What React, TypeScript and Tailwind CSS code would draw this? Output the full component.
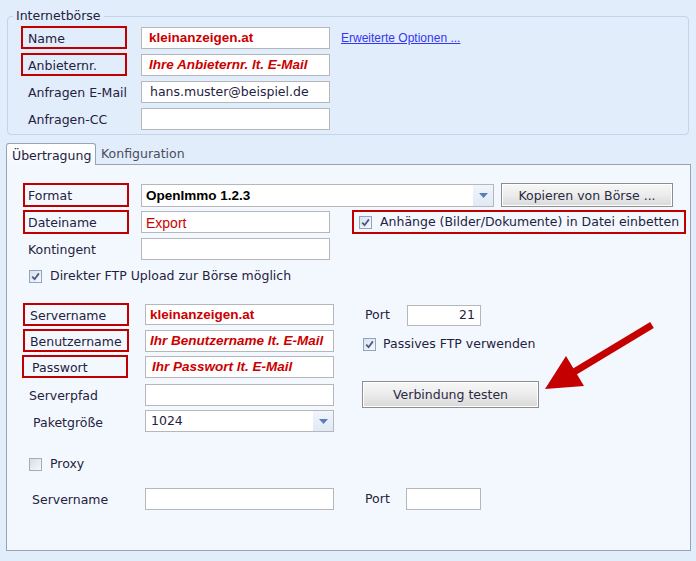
import React from "react";

const ARIAL = "font-['Liberation_Sans',Arial,sans-serif]";

function Check({ checked }: { checked?: boolean }) {
  return (
    <span className="w-[13px] h-[13px] shrink-0 border border-[#8fa3c2] bg-gradient-to-br from-[#d9e1ec] to-[#f8fafd] flex items-center justify-center">
      {checked && (
        <svg width="9" height="9" viewBox="0 0 9 9">
          <path d="M1.2 4.6 L3.6 7.2 L7.9 1.4" stroke="#4b5b84" strokeWidth="1.8" fill="none" />
        </svg>
      )}
    </span>
  );
}

function LabelBox({
  children,
  boxed,
  className = "",
}: {
  children: React.ReactNode;
  boxed?: boolean;
  className?: string;
}) {
  return (
    <div
      className={`w-[106px] shrink-0 border-2 flex items-center whitespace-nowrap ${
        boxed ? "border-[#c00000]" : "border-transparent"
      } ${className}`}
    >
      {children}
    </div>
  );
}

function Input({ children, className = "" }: { children?: React.ReactNode; className?: string }) {
  return (
    <div className={`shrink-0 bg-white border border-[#b5b7bb] flex items-center whitespace-nowrap overflow-hidden ${className}`}>
      {children}
    </div>
  );
}

function Select({ children, className = "" }: { children?: React.ReactNode; className?: string }) {
  return (
    <div className={`shrink-0 bg-white border border-[#b5b7bb] flex items-stretch ${className}`}>
      <div className="flex-1 flex items-center whitespace-nowrap overflow-hidden">{children}</div>
      <div className="w-[20px] bg-gradient-to-b from-[#f1f5fb] to-[#e0e9f5] flex items-center justify-center">
        <svg width="9" height="5" viewBox="0 0 9 5">
          <path d="M0 0 H9 L4.5 5 Z" fill="#5a7eb2" />
        </svg>
      </div>
    </div>
  );
}

function Button({ children, className = "" }: { children: React.ReactNode; className?: string }) {
  return (
    <div
      className={`shrink-0 border border-[#8d8e90] bg-gradient-to-b from-[#f7f7f7] via-[#ececec] to-[#d9d9d9] shadow-[inset_0_0_0_1px_#ffffff] flex items-center justify-center pt-[2px] text-[#2a2a44] ${className}`}
    >
      {children}
    </div>
  );
}

const red = `${ARIAL} font-bold text-[13.5px] text-[#cc0000]`;

export default function App() {
  return (
    <div className="relative w-[696px] h-[561px] overflow-hidden bg-[#e2edfb] text-[12.5px] leading-none text-[#1f2240] font-['DejaVu_Sans',Verdana,sans-serif]">
      {/* Internetbörse group */}
      <fieldset className="ml-[7px] mt-[8px] w-[682px] border border-[#c3d3e8] rounded-[4px] p-0 pb-[4px]">
        <legend className="ml-[5px] px-[3px] leading-[16px]">Internetbörse</legend>
        <div className="flex flex-col gap-[4px] pt-[2px]">
          <div className="flex items-center h-[23px]">
            <LabelBox boxed className="ml-[13px] h-[23px] pl-[5px] pt-[3px]">Name</LabelBox>
            <Input className="ml-[14px] w-[189px] h-[22px] pl-[7px]">
              <span className={red}>kleinanzeigen.at</span>
            </Input>
            <span className={`${ARIAL} ml-[11px] text-[12px] text-[#3636f5] underline`}>Erweiterte Optionen ...</span>
          </div>
          <div className="flex items-center h-[23px]">
            <LabelBox boxed className="ml-[13px] h-[23px] pl-[5px] pt-[3px]">Anbieternr.</LabelBox>
            <Input className="ml-[14px] w-[189px] h-[22px] pl-[7px]">
              <span className={`${red} italic`}>Ihre Anbieternr. lt. E-Mail</span>
            </Input>
          </div>
          <div className="flex items-center h-[23px]">
            <LabelBox className="ml-[13px] h-[23px] pl-[5px] pt-[3px]">Anfragen E-Mail</LabelBox>
            <Input className="ml-[14px] w-[189px] h-[22px] pl-[8px] pt-[1px]">hans.muster@beispiel.de</Input>
          </div>
          <div className="flex items-center h-[23px]">
            <LabelBox className="ml-[13px] h-[23px] pl-[5px] pt-[3px]">Anfragen-CC</LabelBox>
            <Input className="ml-[14px] w-[189px] h-[22px]" />
          </div>
        </div>
      </fieldset>

      {/* Tabs */}
      <div className="ml-[6px] mt-[8px] flex items-end h-[21px]">
        <div className="relative z-10 -mb-px h-[22px] w-[90px] border border-b-0 border-[#9aa4b0] rounded-t-[3px] bg-gradient-to-b from-[#ffffff] to-[#f3f8fe] pl-[5px] pt-[3px] flex items-center">
          Übertragung
        </div>
        <div className="ml-[5px] h-[21px] pt-[2px] flex items-center text-[#4a4c5c]">Konfiguration</div>
      </div>

      {/* Panel */}
      <div className="ml-[6px] w-[685px] h-[387px] border border-[#9aa4b0] bg-[#f3f8fe] flex flex-col pt-[18px]">
        {/* Format */}
        <div className="flex items-center h-[24px]">
          <LabelBox boxed className="ml-[16px] h-[24px] pl-[3px] pt-[3px]">Format</LabelBox>
          <Select className="ml-[12px] w-[353px] h-[23px]">
            <span className={`${ARIAL} font-bold text-[13.5px] text-black pl-[4px] pt-[1px]`}>OpenImmo 1.2.3</span>
          </Select>
          <Button className="ml-[7px] w-[172px] h-[24px]">Kopieren von Börse ...</Button>
        </div>
        {/* Dateiname */}
        <div className="flex items-center h-[24px] mt-[3px]">
          <LabelBox boxed className="ml-[16px] h-[24px] pl-[3px] pt-[3px]">Dateiname</LabelBox>
          <Input className="ml-[12px] w-[189px] h-[22px] pl-[4px] pt-[1px]">
            <span className={`${ARIAL} text-[14px] text-[#cc0000]`}>Export</span>
          </Input>
          <div className="ml-[22px] w-[334px] h-[24px] border-2 border-[#c00000] flex items-center pl-[5px]">
            <Check checked />
            <span className="ml-[8px] pt-[1px] whitespace-nowrap">Anhänge (Bilder/Dokumente) in Datei einbetten</span>
          </div>
        </div>
        {/* Kontingent */}
        <div className="flex items-center h-[24px] mt-[3px]">
          <LabelBox className="ml-[16px] h-[24px] pl-[3px] pt-[3px]">Kontingent</LabelBox>
          <Input className="ml-[12px] w-[189px] h-[22px]" />
        </div>
        {/* Direkter FTP */}
        <div className="flex items-center h-[14px] mt-[8px] ml-[22px]">
          <Check checked />
          <span className="ml-[8px] pt-[1px]">Direkter FTP Upload zur Börse möglich</span>
        </div>

        {/* FTP section */}
        <div className="flex mt-[20px]">
          <div className="flex flex-col">
            <div className="flex items-center h-[23px]">
              <LabelBox boxed className="ml-[16px] h-[23px] pl-[5px] pt-[3px]">Servername</LabelBox>
              <Input className="ml-[16px] w-[189px] h-[21px] pl-[4px]">
                <span className={red}>kleinanzeigen.at</span>
              </Input>
            </div>
            <div className="flex items-center h-[23px] mt-[3px]">
              <LabelBox boxed className="ml-[16px] h-[23px] pl-[5px] pt-[3px]">Benutzername</LabelBox>
              <Input className="ml-[16px] w-[189px] h-[22px] pl-[4px]">
                <span className={`${red} italic`}>Ihr Benutzername lt. E-Mail</span>
              </Input>
            </div>
            <div className="flex items-center h-[23px] mt-[3px]">
              <LabelBox boxed className="ml-[15px] w-[105px] h-[23px] pl-[8px] pt-[3px]">Passwort</LabelBox>
              <Input className="ml-[17px] w-[189px] h-[22px] pl-[6px]">
                <span className={`${red} italic`}>Ihr Passwort lt. E-Mail</span>
              </Input>
            </div>
            <div className="flex items-center h-[22px] mt-[6px]">
              <LabelBox className="ml-[16px] h-[22px] pl-[4px] pt-[3px]">Serverpfad</LabelBox>
              <Input className="ml-[16px] w-[189px] h-[22px]" />
            </div>
            <div className="flex items-center h-[22px] mt-[4px]">
              <LabelBox className="ml-[16px] h-[22px] pl-[8px] pt-[5px]">Paketgröße</LabelBox>
              <Select className="ml-[16px] w-[189px] h-[22px]">
                <span className="pl-[5px] pt-[1px]">1024</span>
              </Select>
            </div>
          </div>
          <div className="flex flex-col ml-[28px]">
            <div className="flex items-center h-[22px] mt-[1px]">
              <span className="ml-[3px] w-[42px] pt-[1px]">Port</span>
              <Input className="w-[74px] h-[21px] justify-end pr-[5px] pt-[1px]">21</Input>
            </div>
            <div className="flex items-center h-[14px] mt-[11px] ml-[1px]">
              <Check checked />
              <span className="ml-[7px] pt-[1px]">Passives FTP verwenden</span>
            </div>
            <Button className="mt-[30px] w-[177px] h-[27px]">Verbindung testen</Button>
          </div>
        </div>

        {/* Proxy */}
        <div className="flex items-center h-[14px] mt-[25px] ml-[22px]">
          <span className="w-[13px] h-[13px] shrink-0 border border-[#a3acb8] bg-gradient-to-br from-[#d8dde4] to-[#f7f8fa]" />
          <span className="ml-[8px] pt-[1px]">Proxy</span>
        </div>
        <div className="flex items-center h-[22px] mt-[17px]">
          <LabelBox className="ml-[16px] h-[22px] pl-[7px] pt-[3px]">Servername</LabelBox>
          <Input className="ml-[16px] w-[189px] h-[22px]" />
          <span className="ml-[31px] w-[41px] pt-[1px]">Port</span>
          <Input className="w-[75px] h-[22px]" />
        </div>
      </div>

      {/* Annotation arrow */}
      <svg className="absolute inset-0 pointer-events-none" width="696" height="561" viewBox="0 0 696 561">
        <line x1="652" y1="325" x2="574" y2="372" stroke="#c40000" strokeWidth="7" strokeLinecap="butt" />
        <polygon points="545,389 566,356 584,386" fill="#c40000" />
      </svg>
    </div>
  );
}
